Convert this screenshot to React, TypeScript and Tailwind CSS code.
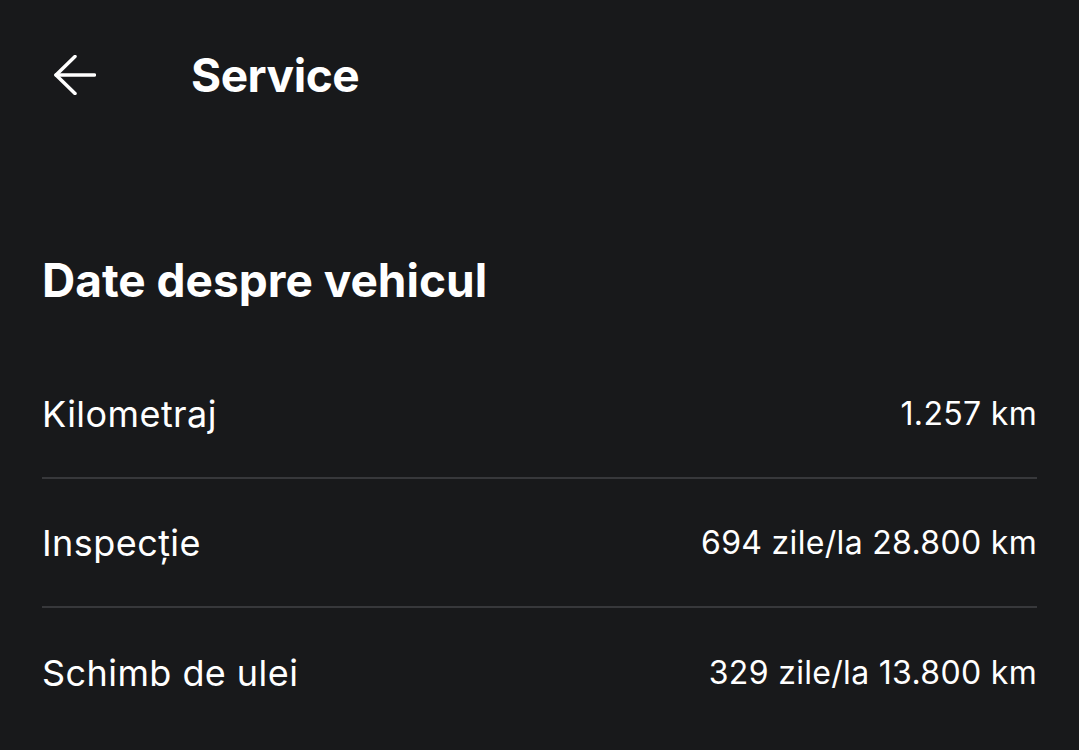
import React from 'react';

const rows = [
  { label: 'Kilometraj', value: '1.257 km' },
  { label: 'Inspecție', value: '694 zile/la 28.800 km' },
  { label: 'Schimb de ulei', value: '329 zile/la 13.800 km' },
];

const BackArrow = () => (
  <svg width="42" height="40" viewBox="0 0 42 40" fill="none" stroke="currentColor" strokeWidth="3.5" strokeLinecap="round" strokeLinejoin="round">
    <path d="M21 1.5 2 20l19 18.5" />
    <path d="M2 20h38.5" />
  </svg>
);

export default function App() {
  return (
    <div className="min-h-[750px] w-full bg-[#18191b] text-white font-['Inter',sans-serif]">
      {/* header */}
      <div className="flex h-[150px] items-center px-[54px]">
        <button className="text-white">
          <BackArrow />
        </button>
        <h1 className="ml-[95px] text-[46px] font-bold leading-none tracking-[-0.01em]">Service</h1>
      </div>

      <div className="px-[42px]">
        <h2 className="pt-[107px] pb-[47px] text-[46px] font-bold leading-[46px]">
          Date despre vehicul
        </h2>

        <div className="flex flex-col">
          {rows.map((row, i) => (
            <div
              key={row.label}
              className={`flex h-[129px] items-center justify-between ${i < rows.length - 1 ? 'border-b-2 border-[#37383b]' : ''}`}
            >
              <span className="text-[36px] leading-none tracking-[0.012em]">{row.label}</span>
              <span className="text-[32px] leading-none tracking-[0.01em]">{row.value}</span>
            </div>
          ))}
        </div>
      </div>
    </div>
  );
}
